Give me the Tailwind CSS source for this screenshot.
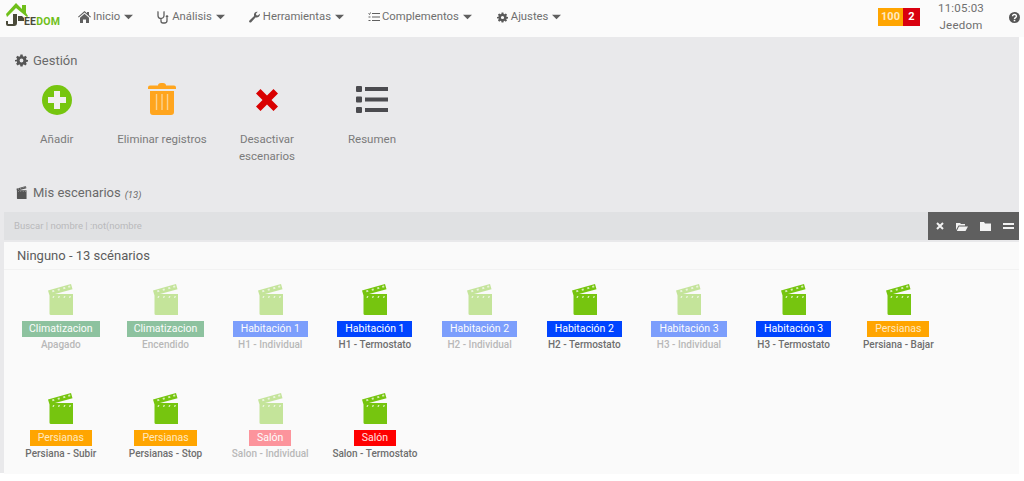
<!DOCTYPE html>
<html lang="es">
<head>
  <meta charset="UTF-8" />
  <title>Jeedom - Escenarios</title>
  <script src="https://cdn.jsdelivr.net/npm/@tailwindcss/browser@4"></script>
</head>
<body class="bg-white font-['Roboto',sans-serif] text-[#6b6b6b] w-[1024px] h-[481px] overflow-hidden">

  <!-- Sprites -->
  <svg class="hidden">
    <symbol id="cog" viewBox="0 0 24 24"><path fill="currentColor" fill-rule="evenodd" d="M10 1h4l.6 3.2 1.900.8L19.200 3.200 22 6l-1.900 2.700.8 1.900L24 11v3l-3.100.600-.8 1.900L22 18.200 19.200 21l-2.700-1.800-1.900.8L14 23h-4l-.6-3-1.900-.8L4.800 21 2 18.200l1.900-2.700-.8-1.900L0 14v-3l3.100-.400.8-1.900L2 6l2.800-2.800L7.500 5l1.900-.8zM12 8.500a3.500 3.500 0 1 0 0 7 3.500 3.500 0 0 0 0-7z"/></symbol>
    <symbol id="clap" viewBox="0 0 25 31"><path fill="currentColor" d="M0 6.500 23 0l1.500 5.200L1.500 11.500zM1.500 10H25v21H3a1.500 1.500 0 0 1-1.500-1.500z"/><g fill="#fff" opacity=".7"><path d="M4 6.500l2-.6.500 1.800-2 .6zM9.500 5l2-.6.500 1.800-2 .6zM15 3.500l2-.6.500 1.800-2 .6zM20 2l2-.6.500 1.800-2 .6z"/><path d="M5 12h1.500l-.8 2H4.500zM10.500 12H12l-.8 2h-1.200zM16 12h1.500l-.8 2h-1.200zM21.500 12H23l-.8 2H21z"/></g></symbol>
    <symbol id="caret" viewBox="0 0 10 6"><path fill="currentColor" d="M0 .5h10L5 5.500z"/></symbol>
  </svg>

  <!-- Navbar -->
  <header class="h-[37px] bg-[#fbfbfb] flex items-center relative">
    <div class="w-[78px] h-[37px] shrink-0 relative">
      <svg class="absolute left-[5px] top-[2px] w-[23px] h-[25px]" viewBox="0 0 23 25">
        <path fill="#6fbf1a" d="M1 12 11 1l6 6V3h4v8l2 3-1 1-11-9-9 9z"/>
        <path fill="#4a4a3a" d="M8 12h4v9a3 3 0 0 1-3 3H3a2 2 0 0 1-2-2v-3h2v3h5zM13 14h4l2 2v3h-6z"/>
      </svg>
      <span class="absolute left-[24px] top-[15px] text-[10.500px] leading-[14px] font-bold tracking-[0.2px]"><span class="text-[#4a4a3a]">EE</span><span class="text-[#6fbf1a]">DOM</span></span>
    </div>

    <nav class="flex items-center gap-[24px] text-[11.300px] text-[#6f6f6f] -mt-[3px]">
      <a class="flex items-center">
        <svg class="w-[13px] h-[12px] mr-[2px]" viewBox="0 0 13 12"><path fill="#5f5f5f" d="M6.500 0 9 2.200V1h2v3l2 1.800-.7.800L6.500 1.400.7 6.600 0 5.800zM2 6.800l4.500-4 4.500 4V12H8V8.500H5V12H2z"/></svg>
        Inicio
        <svg class="w-[9px] h-[6px] ml-[4px] text-[#5f5f5f]"><use href="#caret"/></svg>
      </a>
      <a class="flex items-center">
        <svg class="w-[12px] h-[13px] mr-[3px]" viewBox="0 0 12 13"><path fill="none" stroke="#5f5f5f" stroke-width="1.300" d="M1.500 1H1v3.500a3 3 0 0 0 6 0V1h-.5M4 7.500V10a2 2 0 0 0 2 2h1.500a2.500 2.500 0 0 0 2.500-2.500V7"/><circle cx="10" cy="5.500" r="1.300" fill="#5f5f5f"/></svg>
        Análisis
        <svg class="w-[9px] h-[6px] ml-[4px] text-[#5f5f5f]"><use href="#caret"/></svg>
      </a>
      <a class="flex items-center">
        <svg class="w-[11px] h-[12px] mr-[3px]" viewBox="0 0 12 12"><path fill="#5f5f5f" d="M11.800 2.500A3.500 3.500 0 0 1 7.300 6.400L2.400 11.600a1.200 1.200 0 0 1-1.900-1.800L5.600 4.800A3.500 3.500 0 0 1 9.500.200L7.500 2.400 8 4l1.700.4z"/></svg>
        Herramientas
        <svg class="w-[9px] h-[6px] ml-[4px] text-[#5f5f5f]"><use href="#caret"/></svg>
      </a>
      <a class="flex items-center">
        <svg class="w-[12px] h-[10px] mr-[2px]" viewBox="0 0 12 10"><path fill="none" stroke="#5f5f5f" stroke-width="1" d="M4 1.500h8M4 5h8M4 8.500h8M.500 1.500l1 1 1-2M.500 5h2M.500 8.500h2"/></svg>
        Complementos
        <svg class="w-[9px] h-[6px] ml-[4px] text-[#5f5f5f]"><use href="#caret"/></svg>
      </a>
      <a class="flex items-center ml-[1px]">
        <svg class="w-[11px] h-[11px] mr-[3px] text-[#5a5a5a]"><use href="#cog"/></svg>
        Ajustes
        <svg class="w-[9px] h-[6px] ml-[4px] text-[#5f5f5f]"><use href="#caret"/></svg>
      </a>
    </nav>

    <div class="ml-auto flex items-center -mt-[3px]">
      <div class="flex h-[18px] mr-[16px] text-[11px] font-bold text-[#ffe9c0] leading-[18px] text-center">
        <span class="w-[25px] bg-[#ffa500]">100</span>
        <span class="w-[17px] bg-[#d9000f] text-white">2</span>
      </div>
      <div class="w-[50px] text-center text-[11.500px] leading-[17px] text-[#6f6f6f] -mt-[1px] tracking-[0.2px]">
        <div>11:05:03</div>
        <div>Jeedom</div>
      </div>
      <svg class="w-[11px] h-[11px] ml-[23px] mr-[4px]" viewBox="0 0 11 11"><circle cx="5.500" cy="5.500" r="5.500" fill="#555"/><path fill="none" stroke="#fff" stroke-width="1.500" d="M3.600 4.200a1.900 1.700 0 1 1 2.900 1.400c-.7.500-1 .7-1 1.400"/><rect x="4.700" y="7.800" width="1.600" height="1.500" fill="#fff"/></svg>
    </div>
  </header>

  <!-- Main Content -->
  <main class="bg-[#e9e9eb] h-[436px] w-[1019px] pt-[15px] pl-[4px]">
    <h2 class="flex items-center h-[17px] pl-[11px] text-[13px] text-[#6a6a6a]">
      <svg class="w-[13px] h-[13px] mr-[5px] text-[#555]"><use href="#cog"/></svg>
      Gestión
    </h2>

    <div class="flex mt-[14px] text-[11.500px] text-[#7b7b7b] leading-[17px] text-center h-[101px]">
      <div class="w-[105.500px]">
        <svg class="mx-auto w-[30px] h-[30px] mt-[2px]" viewBox="0 0 30 30"><circle cx="15" cy="15" r="15" fill="#76c50f"/><path fill="#f0f0f0" d="M12 6h6v6h6v6h-6v6h-6v-6H6v-6h6z"/></svg>
        <p class="mt-[16px]">Añadir</p>
      </div>
      <div class="w-[105px]">
        <svg class="mx-auto w-[28px] h-[32px]" viewBox="0 0 28 32"><path fill="#ffa51e" d="M10 2.500Q10 0 13 0h2q3 0 3 2.500h8q2 0 2 2V6H0V4.500q0-2 2-2zM2 8h24v21q0 3-3 3H5q-3 0-3-3z"/><path stroke="#fbd28f" stroke-width="1.400" d="M8.500 11v16M14 11v16M19.500 11v16"/></svg>
        <p class="mt-[16px]">Eliminar registros</p>
      </div>
      <div class="w-[105px]">
        <svg class="mx-auto w-[22px] h-[22px] mt-[6px]" viewBox="0 0 22 22"><path fill="#d90000" d="M4.500 0 11 6.500 17.500 0 22 4.500 15.500 11l6.500 6.500-4.500 4.500-6.500-6.500L4.500 22 0 17.500 6.500 11 0 4.500z"/></svg>
        <p class="mt-[20px] px-[20px]">Desactivar escenarios</p>
      </div>
      <div class="w-[105px]">
        <svg class="mx-auto w-[32px] h-[27px] mt-[3px]" viewBox="0 0 32 27"><path fill="#4b4b4f" d="M1 0h4a1 1 0 0 1 1 1v4a1 1 0 0 1-1 1H1a1 1 0 0 1-1-1V1a1 1 0 0 1 1-1zm0 10.500h4a1 1 0 0 1 1 1v4a1 1 0 0 1-1 1H1a1 1 0 0 1-1-1v-4a1 1 0 0 1 1-1zM1 21h4a1 1 0 0 1 1 1v4a1 1 0 0 1-1 1H1a1 1 0 0 1-1-1v-4a1 1 0 0 1 1-1zM9 1h23v4H9zm0 10.500h23v4H9zM9 22h23v4H9z"/></svg>
        <p class="mt-[18px]">Resumen</p>
      </div>
    </div>

    <h2 class="flex items-center h-[17px] pl-[12px] text-[13px] text-[#6a6a6a]">
      <svg class="w-[11px] h-[13px] mr-[6px] text-[#555]" viewBox="0 0 25 31"><use href="#clap"/></svg>
      Mis escenarios
      <span class="italic text-[9.500px] ml-[4px] mt-[5px]">(13)</span>
    </h2>

    <!-- Search -->
    <div class="flex h-[28px] mt-[11px] bg-[#e0e1e3]">
      <span class="flex-1 pl-[10px] text-[9.500px] leading-[28px] text-[#b9b9bb]">Buscar | nombre | :not(nombre</span>
      <div class="w-[91px] bg-[#5f5f5f] flex items-center justify-between pl-[8px] pr-[5px] text-[#f2f2f2]">
        <svg class="w-[8px] h-[8px]" viewBox="0 0 8 8"><path stroke="currentColor" stroke-width="2" d="M1 1l6 6M7 1 1 7"/></svg>
        <svg class="w-[12px] h-[9px]" viewBox="0 0 12 9"><path fill="currentColor" d="M0 1h4l1 1h4v1.500H2.500L0 8zM3 4.500h9L9.500 9H.800z"/></svg>
        <svg class="w-[11px] h-[9px]" viewBox="0 0 11 9"><path fill="currentColor" d="M0 0h4l1 1.500h6V9H0z"/></svg>
        <svg class="w-[11px] h-[6px]" viewBox="0 0 11 6"><path fill="currentColor" d="M0 0h11v2H0zm0 4h11v2H0z"/></svg>
      </div>
    </div>

    <!-- Scenarios -->
    <section class="mt-[2px] h-[232px] bg-[#fafafa]">
      <h3 class="h-[28px] pl-[13px] text-[13px] leading-[28px] text-[#5c5c5c] border-b border-[#f2f2f2]">Ninguno - 13 scénarios</h3>
      <div class="flex flex-wrap pl-[4.500px] text-center">

        <div class="w-[104.700px] h-[109px] pt-[14px] opacity-50">
          <svg class="mx-auto w-[25px] h-[31px] text-[#76c50f] opacity-80"><use href="#clap"/></svg>
          <span class="inline-block mt-[5px] px-[7px] h-[16px] bg-[#228c46] text-white text-[10.500px] leading-[16px]">Climatizacion</span>
          <p class="-mt-[1px] text-[10px] font-medium leading-[13px] text-[#777]">Apagado</p>
        </div>
        <div class="w-[104.700px] h-[109px] pt-[14px] opacity-50">
          <svg class="mx-auto w-[25px] h-[31px] text-[#76c50f] opacity-80"><use href="#clap"/></svg>
          <span class="inline-block mt-[5px] px-[7px] h-[16px] bg-[#228c46] text-white text-[10.500px] leading-[16px]">Climatizacion</span>
          <p class="-mt-[1px] text-[10px] font-medium leading-[13px] text-[#777]">Encendido</p>
        </div>
        <div class="w-[104.700px] h-[109px] pt-[14px] opacity-50">
          <svg class="mx-auto w-[25px] h-[31px] text-[#76c50f] opacity-80"><use href="#clap"/></svg>
          <span class="inline-block mt-[5px] px-[8px] h-[16px] bg-[#0044ff] text-white text-[10.500px] leading-[16px]">Habitación 1</span>
          <p class="-mt-[1px] text-[10px] font-medium leading-[13px] text-[#777]">H1 - Individual</p>
        </div>
        <div class="w-[104.700px] h-[109px] pt-[14px]">
          <svg class="mx-auto w-[25px] h-[31px] text-[#76c50f]"><use href="#clap"/></svg>
          <span class="inline-block mt-[5px] px-[8px] h-[16px] bg-[#0044ff] text-white text-[10.500px] leading-[16px]">Habitación 1</span>
          <p class="-mt-[1px] text-[10px] font-medium leading-[13px] text-[#6e6e6e]">H1 - Termostato</p>
        </div>
        <div class="w-[104.700px] h-[109px] pt-[14px] opacity-50">
          <svg class="mx-auto w-[25px] h-[31px] text-[#76c50f] opacity-80"><use href="#clap"/></svg>
          <span class="inline-block mt-[5px] px-[8px] h-[16px] bg-[#0044ff] text-white text-[10.500px] leading-[16px]">Habitación 2</span>
          <p class="-mt-[1px] text-[10px] font-medium leading-[13px] text-[#777]">H2 - Individual</p>
        </div>
        <div class="w-[104.700px] h-[109px] pt-[14px]">
          <svg class="mx-auto w-[25px] h-[31px] text-[#76c50f]"><use href="#clap"/></svg>
          <span class="inline-block mt-[5px] px-[8px] h-[16px] bg-[#0044ff] text-white text-[10.500px] leading-[16px]">Habitación 2</span>
          <p class="-mt-[1px] text-[10px] font-medium leading-[13px] text-[#6e6e6e]">H2 - Termostato</p>
        </div>
        <div class="w-[104.700px] h-[109px] pt-[14px] opacity-50">
          <svg class="mx-auto w-[25px] h-[31px] text-[#76c50f] opacity-80"><use href="#clap"/></svg>
          <span class="inline-block mt-[5px] px-[8px] h-[16px] bg-[#0044ff] text-white text-[10.500px] leading-[16px]">Habitación 3</span>
          <p class="-mt-[1px] text-[10px] font-medium leading-[13px] text-[#777]">H3 - Individual</p>
        </div>
        <div class="w-[104.700px] h-[109px] pt-[14px]">
          <svg class="mx-auto w-[25px] h-[31px] text-[#76c50f]"><use href="#clap"/></svg>
          <span class="inline-block mt-[5px] px-[8px] h-[16px] bg-[#0044ff] text-white text-[10.500px] leading-[16px]">Habitación 3</span>
          <p class="-mt-[1px] text-[10px] font-medium leading-[13px] text-[#6e6e6e]">H3 - Termostato</p>
        </div>
        <div class="w-[104.700px] h-[109px] pt-[14px]">
          <svg class="mx-auto w-[25px] h-[31px] text-[#76c50f]"><use href="#clap"/></svg>
          <span class="inline-block mt-[5px] px-[8px] h-[16px] bg-[#ffa500] text-[#ffe9c0] text-[10.500px] leading-[16px]">Persianas</span>
          <p class="-mt-[1px] text-[10px] font-medium leading-[13px] text-[#6e6e6e]">Persiana - Bajar</p>
        </div>

        <div class="w-[104.700px] pt-[14px]">
          <svg class="mx-auto w-[25px] h-[31px] text-[#76c50f]"><use href="#clap"/></svg>
          <span class="inline-block mt-[5px] px-[8px] h-[16px] bg-[#ffa500] text-[#ffe9c0] text-[10.500px] leading-[16px]">Persianas</span>
          <p class="-mt-[1px] text-[10px] font-medium leading-[13px] text-[#6e6e6e]">Persiana - Subir</p>
        </div>
        <div class="w-[104.700px] pt-[14px]">
          <svg class="mx-auto w-[25px] h-[31px] text-[#76c50f]"><use href="#clap"/></svg>
          <span class="inline-block mt-[5px] px-[8px] h-[16px] bg-[#ffa500] text-[#ffe9c0] text-[10.500px] leading-[16px]">Persianas</span>
          <p class="-mt-[1px] text-[10px] font-medium leading-[13px] text-[#6e6e6e]">Persianas - Stop</p>
        </div>
        <div class="w-[104.700px] pt-[14px] opacity-50">
          <svg class="mx-auto w-[25px] h-[31px] text-[#76c50f] opacity-80"><use href="#clap"/></svg>
          <span class="inline-block mt-[5px] px-[8px] h-[16px] bg-[#ff3040] text-white text-[10.500px] leading-[16px]">Salón</span>
          <p class="-mt-[1px] text-[10px] font-medium leading-[13px] text-[#777]">Salon - Individual</p>
        </div>
        <div class="w-[104.700px] pt-[14px]">
          <svg class="mx-auto w-[25px] h-[31px] text-[#76c50f]"><use href="#clap"/></svg>
          <span class="inline-block mt-[5px] px-[8px] h-[16px] bg-[#ff0000] text-[#ffe0e0] text-[10.500px] leading-[16px]">Salón</span>
          <p class="-mt-[1px] text-[10px] font-medium leading-[13px] text-[#6e6e6e]">Salon - Termostato</p>
        </div>

      </div>
    </section>
  </main>

</body>
</html>
